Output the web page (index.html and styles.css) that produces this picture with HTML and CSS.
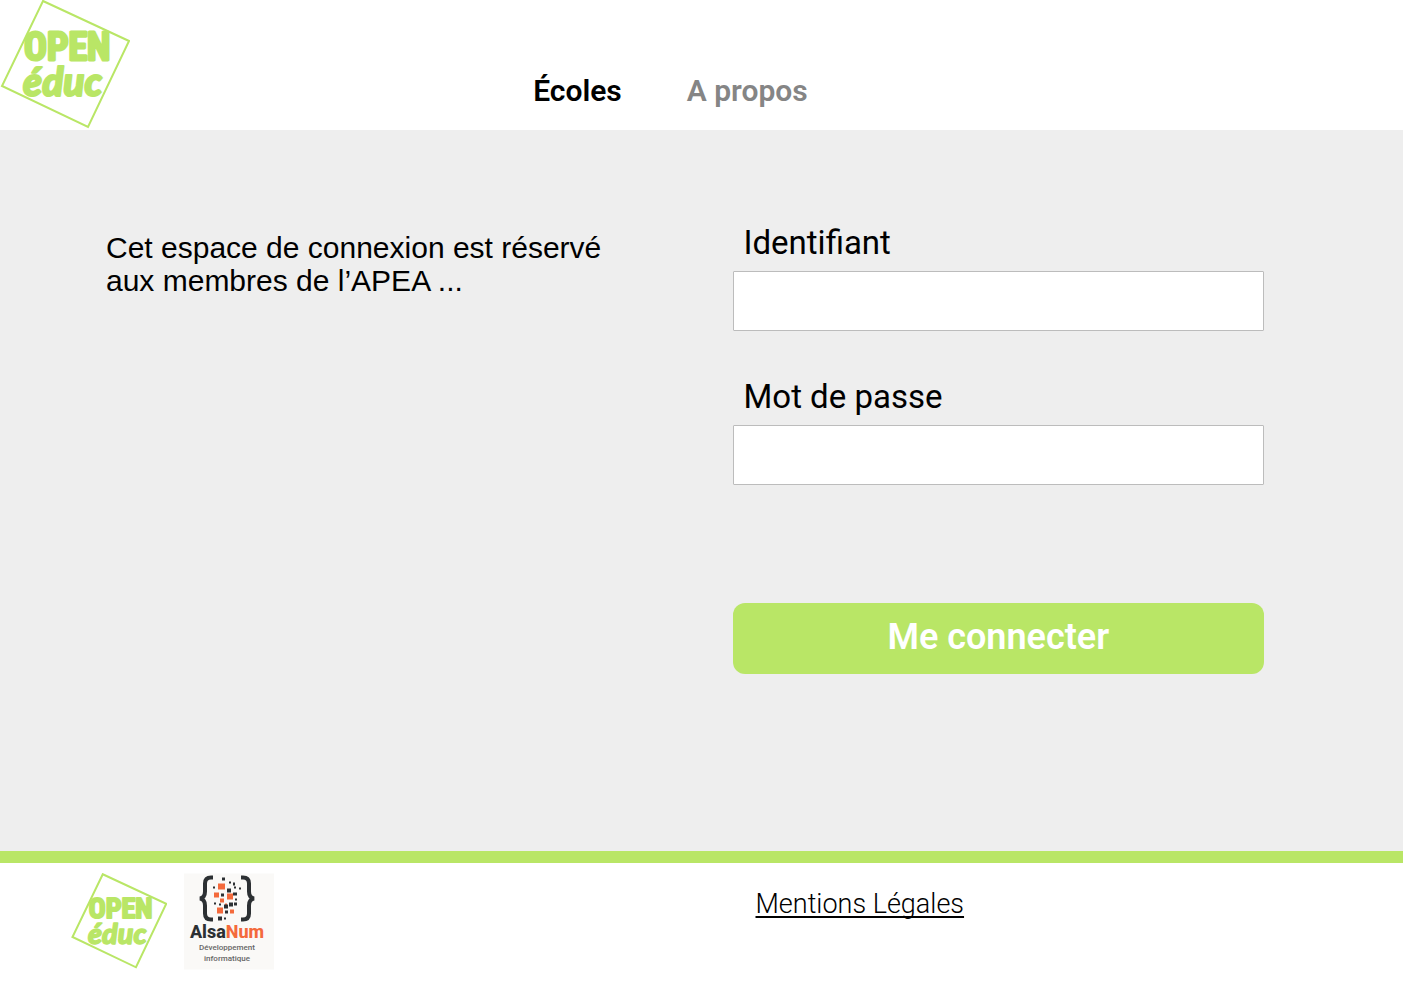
FILE: index.html
```html
<!DOCTYPE html>
<html lang="fr">
<head>
<meta charset="utf-8">
<meta name="viewport" content="width=device-width, initial-scale=1">
<title>Open éduc</title>
<link rel="stylesheet" href="styles.css">
</head>
<body>
<header class="header">
  <a class="brand" href="#" aria-label="Open éduc">
    <svg class="logo" viewBox="0 0 130 130">
      <path class="logo-frame" d="M43 1 L129 41 L88 127 L2 86 Z"/>
      <text class="logo-open" x="24" y="60">OPEN</text>
      <text class="logo-educ" x="23" y="96">éduc</text>
    </svg>
  </a>
  <nav class="nav">
    <a class="nav-link nav-link-active" href="#">Écoles</a>
    <a class="nav-link" href="#">A propos</a>
  </nav>
</header>
<main class="main">
  <p class="notice">Cet espace de connexion est réservé aux membres de l’APEA ...</p>
  <form class="form">
    <div class="field">
      <label class="label" for="login">Identifiant</label>
      <input class="input" id="login" type="text">
    </div>
    <div class="field">
      <label class="label" for="password">Mot de passe</label>
      <input class="input" id="password" type="password">
    </div>
    <button class="submit" type="submit">Me connecter</button>
  </form>
</main>
<footer class="footer">
  <div class="partners">
    <svg class="logo logo-small" viewBox="0 0 130 130" role="img" aria-label="Open éduc">
      <path class="logo-frame" d="M43 1 L129 41 L88 127 L2 86 Z"/>
      <text class="logo-open" x="24" y="60">OPEN</text>
      <text class="logo-educ" x="23" y="96">éduc</text>
    </svg>
    <svg class="alsanum" viewBox="0 0 90 96" role="img" aria-label="AlsaNum">
      <rect width="90" height="96" fill="#faf9f7"/>
      <g fill="none" stroke="#2c3033" stroke-width="4">
        <path d="M29 4 H27 Q21 4 21 10 V18 Q21 24 16 25 Q21 26 21 32 V40 Q21 46 27 46 H29"/>
        <path d="M57 4 H59 Q65 4 65 10 V18 Q65 24 70 25 Q65 26 65 32 V40 Q65 46 59 46 H57"/>
      </g>
      <g fill="#f46a3c">
        <path d="M34 10h7v6h-7zM30 19h5v5h-5zM43 20h6v6h-6zM36 25h4v4h-4zM33 34h6v6h-6zM46 36h4v4h-4zM41 30h2v2h-2z"/>
      </g>
      <g fill="#2c3033">
        <path d="M38 4h3v3h-3zM45 8h2v2h-2zM49 9h2v3h-2zM29 13h2v2h-2zM43 15h4v4h-4zM50 13h2v2h-2zM55 14h2v2h-2zM37 20h3v3h-3zM49 19h4v3h-4zM51 25h2v2h-2zM30 29h2v2h-2zM35 30h2v2h-2zM40 31h4v4h-4zM45 29h4v4h-4zM50 29h3v3h-3zM41 37h3v3h-3zM34 43h4v4h-4zM40 44h2v2h-2z"/>
      </g>
      <text class="alsanum-name" x="43" y="64">Alsa<tspan class="alsanum-accent">Num</tspan></text>
      <text class="alsanum-sub" x="43" y="76">Développement</text>
      <text class="alsanum-sub" x="43" y="87">informatique</text>
    </svg>
  </div>
  <a class="legal" href="#">Mentions Légales</a>
</footer>
</body>
</html>
```
FILE: styles.css
```css
* {
  box-sizing: border-box;
}

body {
  display: flex;
  flex-direction: column;
  min-height: 100vh;
  margin: 0;
  background: #fff;
  color: #000;
  font-family: Roboto, "Liberation Sans", sans-serif;
}

.header {
  display: grid;
  grid-template-columns: 38% 1fr;
  align-items: start;
  height: 130px;
}

.brand {
  justify-self: start;
}

.logo {
  display: block;
  width: 130px;
  height: 130px;
}

.logo-frame {
  fill: none;
  stroke: #b9e666;
  stroke-width: 2;
  vector-effect: non-scaling-stroke;
}

.logo-open,
.logo-educ {
  fill: #b9e666;
  stroke: #b9e666;
  stroke-linejoin: round;
}

.logo-open {
  font: 600 38px "Roboto Condensed", "Open Sans Condensed", sans-serif;
  stroke-width: 3;
}

.logo-educ {
  font: italic 900 39px Lato, sans-serif;
  stroke-width: 2;
}

.nav {
  display: flex;
  gap: 65px;
  padding-top: 74px;
}

.nav-link {
  color: #858585;
  font-size: 30px;
  font-weight: 600;
  line-height: 34px;
  text-decoration: none;
}

.nav-link-active {
  color: #000;
}

.main {
  display: grid;
  flex: 1;
  grid-template-columns: 1fr 1fr;
  column-gap: 95px;
  align-items: start;
  padding: 95px 139px 92px 106px;
  background: #eee;
}

.notice {
  margin: 6px 0 0;
  font: 30px/33px "Liberation Sans", Arial, sans-serif;
}

.form {
  display: grid;
}

.field {
  display: grid;
  margin-bottom: 48px;
}

.label {
  padding-left: 11px;
  font-size: 33px;
  line-height: 36px;
}

.input {
  width: 100%;
  height: 60px;
  margin-top: 10px;
  padding: 0 11px;
  border: 1px solid #bcbcbc;
  border-radius: 1px;
  background: #fff;
  font: inherit;
  font-size: 28px;
}

.submit {
  height: 71px;
  margin-top: 70px;
  padding: 0 16px 4px;
  border: 0;
  border-radius: 12px;
  background: #b9e666;
  color: #fff;
  font: 600 36px Roboto, "Liberation Sans", sans-serif;
}

.footer {
  display: grid;
  grid-template-columns: 1fr 1fr;
  column-gap: 34px;
  align-items: start;
  padding: 10px 71px 22px;
  border-top: 12px solid #b9e666;
}

.partners {
  display: flex;
  gap: 17px;
}

.logo-small {
  width: 96px;
  height: 97px;
}

.alsanum {
  width: 90px;
  height: 97px;
}

.alsanum-name,
.alsanum-sub {
  font-family: Roboto, sans-serif;
  text-anchor: middle;
}

.alsanum-name {
  fill: #2c3033;
  font-size: 18px;
  font-weight: 800;
}

.alsanum-accent {
  fill: #f46a3c;
}

.alsanum-sub {
  fill: #666;
  font-size: 8px;
  font-weight: 500;
}

.legal {
  justify-self: start;
  margin: 14px 0 0 37px;
  color: #000;
  font-size: 27px;
  font-weight: 300;
  line-height: 34px;
  text-decoration-thickness: 2px;
  text-decoration-skip-ink: none;
  text-underline-offset: 3px;
}
```
